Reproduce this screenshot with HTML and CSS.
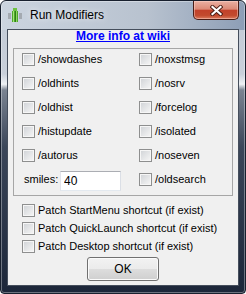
FILE: index.html
```html
<!DOCTYPE html>
<html lang="en">
<head>
    <meta charset="UTF-8">
    <title>Run Modifiers</title>
    <link rel="stylesheet" href="styles.css">
</head>
<body>
    <div class="window">
        <div class="titlebar">
            <svg class="app_icon" width="14" height="15" viewBox="0 0 14 15">
                <rect x="0" y="5" width="3" height="6" fill="#a4aab1"/>
                <rect x="11" y="5" width="3" height="6" fill="#a4aab1"/>
                <rect x="5" y="0" width="4" height="3" fill="#6cc23f"/>
                <rect x="4" y="3" width="6" height="11" fill="#4da82a"/>
                <rect x="5" y="3" width="1" height="11" fill="#a6e47c"/>
                <rect x="7" y="3" width="1" height="11" fill="#2f7d18"/>
                <rect x="8" y="3" width="1" height="11" fill="#8fd660"/>
            </svg>
            <span class="title">Run Modifiers</span>
            <div class="close_btn">
                <svg width="13" height="11" viewBox="0 0 13 11">
                    <path d="M2.5 2 L10.5 9 M10.5 2 L2.5 9" stroke="#4a1d14" stroke-width="4" stroke-linecap="square"/>
                    <path d="M2.5 2 L10.5 9 M10.5 2 L2.5 9" stroke="#fff" stroke-width="2.2" stroke-linecap="square"/>
                </svg>
            </div>
        </div>
        <div class="client">
            <a class="wiki_link" href="#">More info at wiki</a>
            <div class="group">
                <label class="opt"><span class="check"></span>/showdashes</label>
                <label class="opt"><span class="check"></span>/noxstmsg</label>
                <label class="opt"><span class="check"></span>/oldhints</label>
                <label class="opt"><span class="check"></span>/nosrv</label>
                <label class="opt"><span class="check"></span>/oldhist</label>
                <label class="opt"><span class="check"></span>/forcelog</label>
                <label class="opt"><span class="check"></span>/histupdate</label>
                <label class="opt"><span class="check"></span>/isolated</label>
                <label class="opt"><span class="check"></span>/autorus</label>
                <label class="opt"><span class="check"></span>/noseven</label>
                <div class="smiles">
                    <span class="smiles_label">smiles:</span>
                    <input class="textbox" type="text" value="40">
                </div>
                <label class="opt"><span class="check"></span>/oldsearch</label>
            </div>
            <div class="patch_list">
                <label class="opt patch"><span class="check"></span>Patch StartMenu shortcut (if exist)</label>
                <label class="opt patch"><span class="check"></span>Patch QuickLaunch shortcut (if exist)</label>
                <label class="opt patch"><span class="check"></span>Patch Desktop shortcut (if exist)</label>
            </div>
            <button class="ok_btn">OK</button>
        </div>
    </div>
</body>
</html>
```

FILE: styles.css
```css
*{
    padding: 0;
    margin: 0;
    box-sizing: border-box;
}

body{
    font-family: "Liberation Sans", Arial, sans-serif;
    font-size: 11px;
    color: #000;
    background: #fff;
}

.window{
    width: 246px;
    height: 294px;
    display: flex;
    flex-direction: column;
    padding: 0 6px 7px;
    border: 1px solid #18202e;
    border-radius: 6px 6px 4px 4px;
    box-shadow: inset 0 0 0 1px rgba(255,255,255,0.35);
    background:
        linear-gradient(to right, #cbd4df, #b8c2cf 60%, #8d9eb6) top / 100% 29px no-repeat,
        linear-gradient(to bottom, #c2cad5 0, #c9d0da 25%, #eef1f4 28.5%, #7a8391 30.5%, #3b4659 50%, #1c2639 100%);
}

.titlebar{
    height: 28px;
    display: flex;
    align-items: center;
}

.titlebar .app_icon{
    margin-left: 1px;
    margin-top: 1px;
}

.titlebar .title{
    margin-left: 8px;
    font-size: 12px;
    line-height: 14px;
    color: #000;
    text-shadow: 0 0 6px rgba(255,255,255,0.9);
}

.close_btn{
    align-self: flex-start;
    margin-left: auto;
    width: 46px;
    height: 19px;
    display: flex;
    align-items: center;
    justify-content: center;
    border: 1px solid #4a1d16;
    border-top: none;
    border-radius: 0 0 5px 5px;
    box-shadow: inset 0 0 0 1px rgba(255,220,210,0.45);
    background: linear-gradient(to bottom, #eab0a2 0, #dc8a77 45%, #c2412a 52%, #c24a2e 80%, #dc7c5f 100%);
}

.client{
    flex: 1;
    display: flex;
    flex-direction: column;
    border: 1px solid #454e5c;
    background: #f0f0f0;
}

.wiki_link{
    display: block;
    text-align: center;
    font-size: 12px;
    font-weight: bold;
    line-height: 13px;
    color: #0000ff;
    text-decoration: underline;
}

.group{
    margin: 5px 0 0 5px;
    width: 220px;
    display: grid;
    grid-template-columns: 117px 1fr;
    grid-auto-rows: 20px;
    row-gap: 4px;
    align-items: center;
    padding: 0 8px 6px;
    border: 1px solid #a6a6a6;
}

.opt{
    display: flex;
    align-items: center;
    gap: 3px;
    white-space: nowrap;
}

.check{
    width: 13px;
    height: 13px;
    flex-shrink: 0;
    border: 1px solid #8e8f8f;
    box-shadow: inset 0 0 0 1px #f6f6f6;
    background: linear-gradient(135deg, #cfd2d6, #f7f7f7);
}

.smiles{
    display: flex;
    align-items: center;
    padding-left: 2px;
}

.smiles_label{
    width: 36px;
}

.textbox{
    width: 61px;
    height: 20px;
    margin-top: 4px;
    padding-left: 3px;
    font-family: "Liberation Sans", Arial, sans-serif;
    font-size: 12px;
    color: #000;
    background: #fff;
    border: 1px solid;
    border-color: #abadb3 #dbdfe6 #e3e9ef #e2e3ea;
    outline: none;
}

.patch_list{
    margin-top: 5px;
    padding-left: 14px;
}

.patch{
    height: 18px;
}

.ok_btn{
    margin: 2px auto 0;
    width: 72px;
    height: 24px;
    font-family: "Liberation Sans", Arial, sans-serif;
    font-size: 12px;
    color: #000;
    border: 1px solid #707070;
    border-radius: 3px;
    box-shadow: inset 0 0 0 1px #fbfbfb;
    background: linear-gradient(to bottom, #f2f2f2 0, #ebebeb 50%, #dddddd 50%, #cfcfcf 100%);
}
```
